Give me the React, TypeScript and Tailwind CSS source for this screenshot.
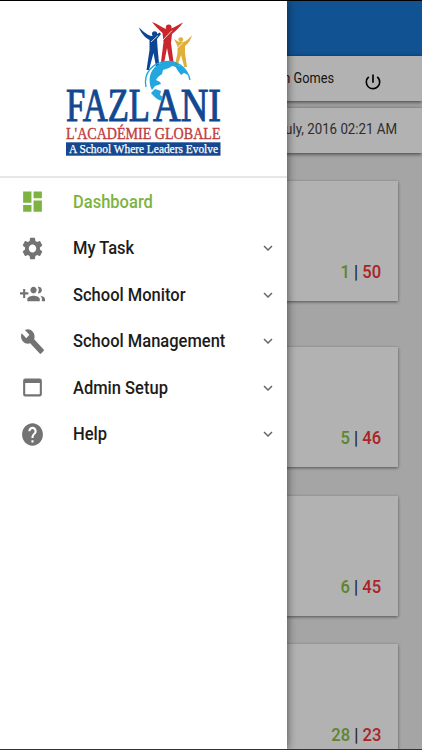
import React from 'react';
import type { IconType } from 'react-icons';
import {
  MdBuild,
  MdDashboard,
  MdHelp,
  MdKeyboardArrowDown,
  MdPowerSettingsNew,
  MdSettings,
  MdWebAsset,
} from 'react-icons/md';

// Plus sign on the left of two people
const GroupAddIcon: IconType = ({ className }) => (
  <svg viewBox="0 0 24 24" fill="currentColor" className={className} preserveAspectRatio="none">
    <path d="M8 10H5V7H3v3H0v2h3v3h2v-3h3v-2zm10 1c1.66 0 2.99-1.34 2.99-3S19.66 5 18 5c-.32 0-.63.05-.91.14.57.81.9 1.79.9 2.86s-.34 2.04-.9 2.86c.28.09.59.14.91.14zm-5 0c1.66 0 2.99-1.34 2.99-3S14.66 5 13 5c-1.66 0-3 1.34-3 3s1.34 3 3 3zm6.62 2.16c.83.73 1.38 1.66 1.38 2.84v2h3v-2c0-1.54-2.37-2.49-4.38-2.84zM13 13c-2 0-6 1-6 3v2h12v-2c0-2-4-3-6-3z" />
  </svg>
);

interface MenuItem {
  label: string;
  icon: IconType;
  active?: boolean;
}

const menuItems: MenuItem[] = [
  { label: 'Dashboard', icon: MdDashboard, active: true },
  { label: 'My Task', icon: MdSettings },
  { label: 'School Monitor', icon: GroupAddIcon },
  { label: 'School Management', icon: MdBuild },
  { label: 'Admin Setup', icon: MdWebAsset },
  { label: 'Help', icon: MdHelp },
];

interface StatCardProps {
  done: number;
  pending: number;
  className?: string;
}

const StatCard: React.FC<StatCardProps> = ({ done, pending, className = '' }) => (
  <div
    className={`flex h-[120px] w-[374px] shrink-0 items-end justify-end bg-white px-[17px] pb-[17px] shadow-[0_1px_3px_rgba(0,0,0,0.5)] ${className}`}
  >
    <p className="origin-right scale-x-[0.92] text-lg leading-6 font-medium whitespace-pre">
      <span className="text-[#85c045]">{done}</span>
      <span className="text-[#333]"> | </span>
      <span className="text-[#f5343a]">{pending}</span>
    </p>
  </div>
);

const Logo: React.FC = () => (
  <svg viewBox="60 15 170 146" className="mt-[14px] ml-[60px] h-[146px] w-[170px] shrink-0 overflow-visible">
    {/* Figures */}
    <g fill="#0d4595">
      <path d="M139 27.5C142 30 146 34.5 151 36L155 35.5L159.5 32.5L161 34L157 39L157.5 47L159.5 69H156.5L153.5 53L149 70H146.5L149.5 50V40C144 37 140.5 32 139 27.5Z" />
      <circle cx="154.6" cy="33.8" r="2.6" />
    </g>
    <g fill="#c9272d">
      <path d="M152 22C157 23.5 162 27.5 166 29H170C175 27.5 179 24 183 22.5C180 27 176 31 172 34L171 43L174 66H170.5L167 48L163.5 66H160.5L163.5 42L162.5 33C158 29 154.5 25 152 22Z" />
      <ellipse cx="168.7" cy="27.6" rx="2.9" ry="3" />
    </g>
    <g fill="#dfaf3a">
      <path d="M174 39L179 42H183C187 41 189.5 38 192 35C191 40 188 43.5 185 46V53L187 67H184.3L181 55L177 67H174.5L177.5 53V46Z" />
      <circle cx="180.8" cy="39.6" r="2.4" />
    </g>
    <path d="M151 42L158 35.5M162 41L172 30.5M177.5 48L183 42.5" stroke="#fff" strokeWidth=".8" />
    {/* Globe */}
    <path d="M146 87C143 73 153 61.5 168 61.5C180 61.5 188 70 190 80" fill="none" stroke="#24a6df" strokeWidth="1.3" />
    <path
      d="M151 88C147 76 152 64 167 61.5C171 61 177 62.5 180 65L177 67L172 66L169 68L163 70L162 74L158 77L156 80L160 82L161 84L155 86L152 90Z"
      fill="#24a6df"
    />
    <path d="M175 66L181 66C185 69 187 72 188 75L184 73L181 75L178 71Z" fill="#24a6df" />
    {/* Word mark */}
    <text x="66" y="121" textLength="84" lengthAdjust="spacingAndGlyphs" fontSize="46" fill="#124890" stroke="#124890" strokeWidth="1" className="font-['Liberation_Serif',serif]">FAZL</text>
    <text x="153" y="121" textLength="68" lengthAdjust="spacingAndGlyphs" fontSize="46" fill="#124890" stroke="#124890" strokeWidth="1" className="font-['Liberation_Serif',serif]">ANI</text>
    <path d="M151 93L155 89L161 91L160 95L163 97L162 101C158 100 154 97 151 93Z" fill="#24a6df" />
    <text x="66" y="138.8" textLength="154.5" lengthAdjust="spacingAndGlyphs" fontSize="17.5" fill="#c23b3d" stroke="#c23b3d" strokeWidth=".4" className="font-['Liberation_Serif',serif]">L&apos;ACADÉMIE GLOBALE</text>
    <rect x="66" y="142.3" width="154.5" height="13.4" fill="#15488f" />
    <text x="69" y="153" textLength="149" lengthAdjust="spacingAndGlyphs" fontSize="11.5" fill="#fff" stroke="#fff" strokeWidth=".25" className="font-['Liberation_Serif',serif]">A School Where Leaders Evolve</text>
  </svg>
);

const Dashboard: React.FC = () => (
  <div className="flex h-full flex-col bg-[#ededed]">
    <div className="h-[55px] shrink-0 bg-[#1976d2]" />
    <div className="flex h-[45px] shrink-0 items-center justify-end bg-white pr-[39px] shadow-[0_1px_4px_rgba(0,0,0,0.65)]">
      <span className="mr-[29px] origin-right scale-x-[0.91] text-[14px] text-[#222]">Glen Gomes</span>
      <MdPowerSettingsNew className="mt-[7px] h-5 w-5 text-black" preserveAspectRatio="none" />
    </div>
    <div className="mt-[7px] flex h-[45px] shrink-0 items-center justify-end bg-white pr-[25px] shadow-[0_1px_4px_rgba(0,0,0,0.65)]">
      <span className="origin-right scale-x-[0.95] pb-[3px] text-[14px] text-[#444]">Sunday, 31 July, 2016 02:21 AM</span>
    </div>
    <div className="flex flex-1 flex-col overflow-hidden pt-7 pl-6">
      <StatCard done={1} pending={50} className="mb-[46px]" />
      <StatCard done={5} pending={46} className="mb-[29px]" />
      <StatCard done={6} pending={45} className="mb-[28px]" />
      <StatCard done={28} pending={23} />
    </div>
  </div>
);

const Drawer: React.FC = () => (
  <aside className="absolute inset-y-0 left-0 flex w-[287px] flex-col bg-white shadow-[0_0_9px_rgba(0,0,0,0.6)]">
    <div className="flex h-[177px] shrink-0 flex-col border-b-2 border-[#e7e7e7]">
      <Logo />
    </div>
    <nav className="flex flex-col pt-[0.5px]">
      {menuItems.map(({ label, icon: Icon, active }) => (
        <button key={label} className="flex h-[46.5px] items-center pr-[10px] text-left">
          <span className={`flex w-[73px] justify-center pr-2 ${active ? 'text-[#7cb342]' : 'text-[#737373]'}`}>
            <Icon className="h-[27px] w-[25px]" preserveAspectRatio="none" />
          </span>
          <span
            className={`origin-left scale-x-[0.917] text-lg font-medium whitespace-nowrap ${active ? 'text-[#7cb342]' : 'text-[#1c1c1c]'}`}
          >
            {label}
          </span>
          {!active && <MdKeyboardArrowDown className="ml-auto h-[18px] w-[18px] text-[#666]" />}
        </button>
      ))}
    </nav>
  </aside>
);

export default function App() {
  return (
    <div className="relative h-[750px] w-[422px] overflow-hidden border-t border-b border-t-black border-b-[#333] bg-white font-[Roboto,sans-serif]">
      <Dashboard />
      <div className="absolute inset-0 bg-black/30" />
      <Drawer />
    </div>
  );
}
